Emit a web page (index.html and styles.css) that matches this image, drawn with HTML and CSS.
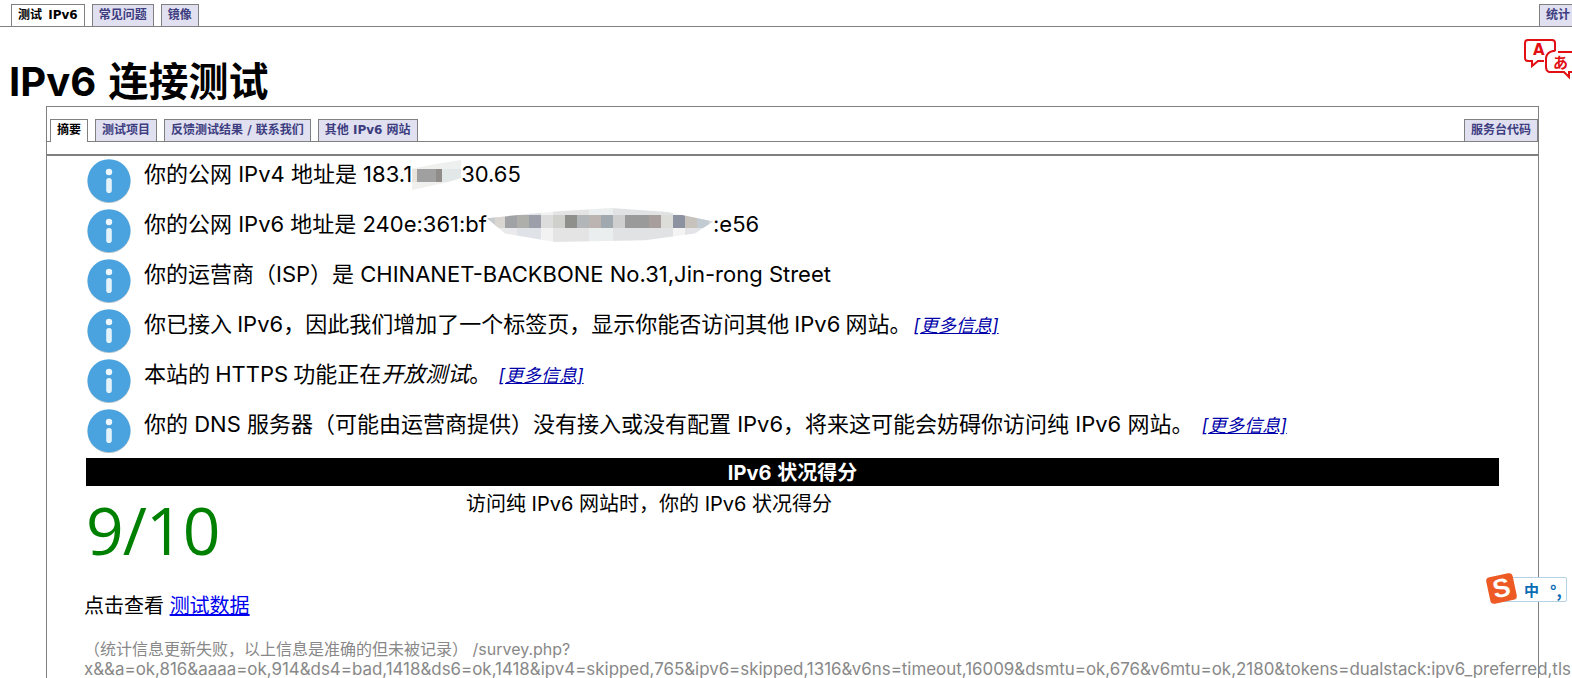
FILE: index.html
```html
<!DOCTYPE html>
<html lang="zh-CN">
<head>
<meta charset="utf-8">
<title>IPv6 连接测试</title>
<link rel="stylesheet" href="styles.css">
</head>
<body>
<svg class="defs" width="0" height="0"><defs><g id="i"><ellipse cx="22" cy="23" rx="21.5" ry="21" fill="#b9c6cf"/><circle cx="22" cy="21.7" r="21.5" fill="#4aa3df"/><circle cx="22" cy="13" r="3.2" fill="#eef7fc"/><rect x="19.2" y="19" width="5.6" height="15" rx="2.8" fill="#e4f2fa"/></g></defs></svg>
<nav class="tabs top-tabs">
  <a class="tab active">测试 IPv6</a>
  <a class="tab">常见问题</a>
  <a class="tab">镜像</a>
  <a class="tab right">统计</a>
</nav>
<svg class="translate" width="48" height="42" viewBox="0 0 48 42">
  <path d="M4 23a3 3 0 0 1-3-3V5a3 3 0 0 1 3-3h24a3 3 0 0 1 3 3v7q0 1-2 1-6 1-7 7v9q0 4 3 5h15l5 5v-5h5M4 23h4v5l6-5h6M34 14h14" fill="none" stroke="#e20f14" stroke-width="2"/>
  <text x="9" y="17" class="tr-a">A</text>
  <text x="29" y="30" class="tr-b">あ</text>
</svg>
<h1 class="title">IPv6 连接测试</h1>
<main class="box">
  <nav class="tabs inner-tabs">
    <a class="tab active">摘要</a>
    <a class="tab">测试项目</a>
    <a class="tab">反馈测试结果 / 联系我们</a>
    <a class="tab">其他 IPv6 网站</a>
    <a class="tab right">服务台代码</a>
  </nav>
  <div class="content">
    <div class="row">
      <svg class="info" viewBox="0 0 44 44"><use href="#i"/></svg>
      <div class="msg">你的公网 IPv4 地址是 183.1<span class="blur b1"></span>30.65</div>
    </div>
    <div class="row">
      <svg class="info" viewBox="0 0 44 44"><use href="#i"/></svg>
      <div class="msg">你的公网 IPv6 地址是 240e:361:bf<span class="blur b2"></span>:e56</div>
    </div>
    <div class="row">
      <svg class="info" viewBox="0 0 44 44"><use href="#i"/></svg>
      <div class="msg">你的运营商（ISP）是 CHINANET-BACKBONE No.31,Jin-rong Street</div>
    </div>
    <div class="row">
      <svg class="info" viewBox="0 0 44 44"><use href="#i"/></svg>
      <div class="msg msg-tight">你已接入 IPv6，因此我们增加了一个标签页，显示你能否访问其他 IPv6 网站。<a class="more" href="#">[更多信息]</a></div>
    </div>
    <div class="row">
      <svg class="info" viewBox="0 0 44 44"><use href="#i"/></svg>
      <div class="msg msg-tight">本站的 HTTPS 功能正在<em>开放测试</em>。 <a class="more" href="#">[更多信息]</a></div>
    </div>
    <div class="row">
      <svg class="info" viewBox="0 0 44 44"><use href="#i"/></svg>
      <div class="msg">你的 DNS 服务器（可能由运营商提供）没有接入或没有配置 IPv6，将来这可能会妨碍你访问纯 IPv6 网站。 <a class="more" href="#">[更多信息]</a></div>
    </div>
    <h2 class="bar">IPv6 状况得分</h2>
    <div class="score">
      <div class="num">9/10</div>
      <div class="score-text">访问纯 IPv6 网站时，你的 IPv6 状况得分</div>
    </div>
    <p class="data">点击查看 <a href="#">测试数据</a></p>
    <p class="stats">（统计信息更新失败，以上信息是准确的但未被记录） /survey.php?<br><span class="query">x&amp;&amp;a=ok,816&amp;aaaa=ok,914&amp;ds4=bad,1418&amp;ds6=ok,1418&amp;ipv4=skipped,765&amp;ipv6=skipped,1316&amp;v6ns=timeout,16009&amp;dsmtu=ok,676&amp;v6mtu=ok,2180&amp;tokens=dualstack:ipv6_preferred,tls</span></p>
  </div>
</main>
<aside class="ime">
  <span class="ime-logo">S</span>
  <span class="ime-zh">中</span>
  <span class="ime-p">°,</span>
</aside>
</body>
</html>
```
FILE: styles.css
```css
html, body { margin: 0; padding: 0; height: 678px; overflow: hidden; background: #fff; }
body { font-family: "Inter", "Noto Sans CJK SC", sans-serif; color: #000; position: relative; }
.defs { position: absolute; }
.tabs { display: flex; gap: 7px; border-bottom: 1px solid #808080; align-items: flex-end; }
.tab { display: block; height: 21px; padding: 0 6px; background: #e0e0f0; border: 1px solid #808080; border-bottom: 0; color: #3d3d80; font: bold 12px/21px "DejaVu Sans", "Noto Sans CJK SC", sans-serif; white-space: nowrap; }
.tab.active { background: #fff; color: #000; height: 22px; margin-bottom: -1px; }
.tab.right { margin-left: auto; }
.top-tabs { height: 26px; padding-left: 11px; overflow: hidden; }
.top-tabs .active { word-spacing: 2px; }
.top-tabs .right { margin-right: -5px; }
.title { margin: 0; padding: 29px 0 0 9px; font-size: 40px; line-height: 52px; font-weight: 700; height: 50px; word-spacing: 3px; }
.box { position: relative; margin-left: 46px; width: 1491px; border: 1px solid #808080; border-bottom: 0; height: 600px; }
.inner-tabs { padding: 12px 0 0 3px; height: 22px; }
.content { margin-top: 12px; border-top: 2px solid #808080; padding: 2px 39px 0 39px; }
.row { display: flex; height: 50px; gap: 13px; }
.info { width: 44px; height: 44px; flex: none; margin: 1px 0 0 1px; }
.msg { font-size: 22px; line-height: 32px; white-space: nowrap; }
.msg-tight { word-spacing: -1px; }
.msg em { font-style: italic; }
.more { font-size: 18px; font-style: italic; color: #00a; margin-left: 2px; }
.blur { display: inline-block; width: 49px; height: 30px; vertical-align: -8px; }
.b1 { clip-path: polygon(0 28%, 60% 10%, 100% 0, 100% 60%, 70% 75%, 0 100%); background: linear-gradient(90deg, #e8e4dc 0 10%, #a0a0a0 10% 50%, #8f8c8a 50% 62%, #e2e8e8 62% 100%) 0 9px / 100% 13px no-repeat, linear-gradient(90deg, #f0f0ee 0 60%, #eef0f0 60% 100%); }
.b2 { width: 226px; height: 34px; vertical-align: -10px; clip-path: polygon(0 30%, 30% 10%, 55% 0, 80% 12%, 100% 40%, 92% 75%, 70% 95%, 30% 100%, 8% 75%); background: linear-gradient(90deg, #c9ccce 0 8px, #d9d5d1 8px 18px, #a0a2a6 18px 30px, #aeaeaa 30px 42px, #9c9fa9 42px 54px, #dcdcdc 54px 66px, #cfcfcb 66px 78px, #8f8f8b 78px 90px, #b2b6b8 90px 102px, #bcb4b0 102px 114px, #a0a8b0 114px 126px, #cfcfcf 126px 138px, #9a9a9a 138px 162px, #a89e9e 162px 174px, #dcdcd8 174px 186px, #8c92a0 186px 198px, #c8c2bc 198px 210px, #c2cad2 210px 222px, #d8dce0 222px 230px) 0 7px / 100% 13px no-repeat, linear-gradient(90deg, #eaeaec 0 30px, #dfe2e6 30px 54px, #f2f2f2 54px 66px, #e4e4e4 66px 102px, #ebeeee 102px 126px, #e0e2e4 126px 186px, #f4f4f4 186px 198px, #e2e4e8 198px 230px); }
.bar { margin: 0; background: #000; color: #fff; height: 28px; line-height: 30px; font-size: 20px; font-weight: 700; text-align: center; word-spacing: 1px; }
.score { display: flex; height: 108px; }
.num { font-size: 66px; line-height: 86px; letter-spacing: -1px; color: #008000; width: 380px; font-family: "Open Sans", sans-serif; }
.score-text { font-size: 20px; line-height: 26px; margin-top: 5px; }
.data { margin: 0 0 0 -2px; font-size: 20px; line-height: 24px; }
.data a { color: #00e; text-decoration: underline; }
.stats { margin: 21px 0 0 -2px; font-size: 16px; line-height: 20px; color: #888; white-space: nowrap; }
.query { font-size: 16.9px; }
.translate { position: absolute; left: 1524px; top: 38px; }
.tr-a { font: bold 15px "DejaVu Sans", sans-serif; fill: #e20f14; }
.tr-b { font: bold 15px "Noto Sans CJK JP", sans-serif; fill: #e20f14; }
.ime { position: absolute; left: 1500px; top: 577px; width: 67px; height: 25px; display: flex; align-items: center; box-sizing: border-box; padding-left: 23px; background: #fff; border: 1px solid #b4d2e6; border-radius: 2px; font-family: "Noto Sans CJK SC", sans-serif; color: #0a6cb4; }
.ime-logo { position: absolute; left: -13px; top: -3px; width: 27px; height: 27px; background: #ee5a24; border-radius: 4px; color: #fff; font: bold 26px/27px "Liberation Sans", sans-serif; text-align: center; transform: rotate(-12deg); }
.ime-zh { font-size: 15px; font-weight: 700; }
.ime-p { font-size: 16px; font-weight: 700; margin-left: 11px; }
```
